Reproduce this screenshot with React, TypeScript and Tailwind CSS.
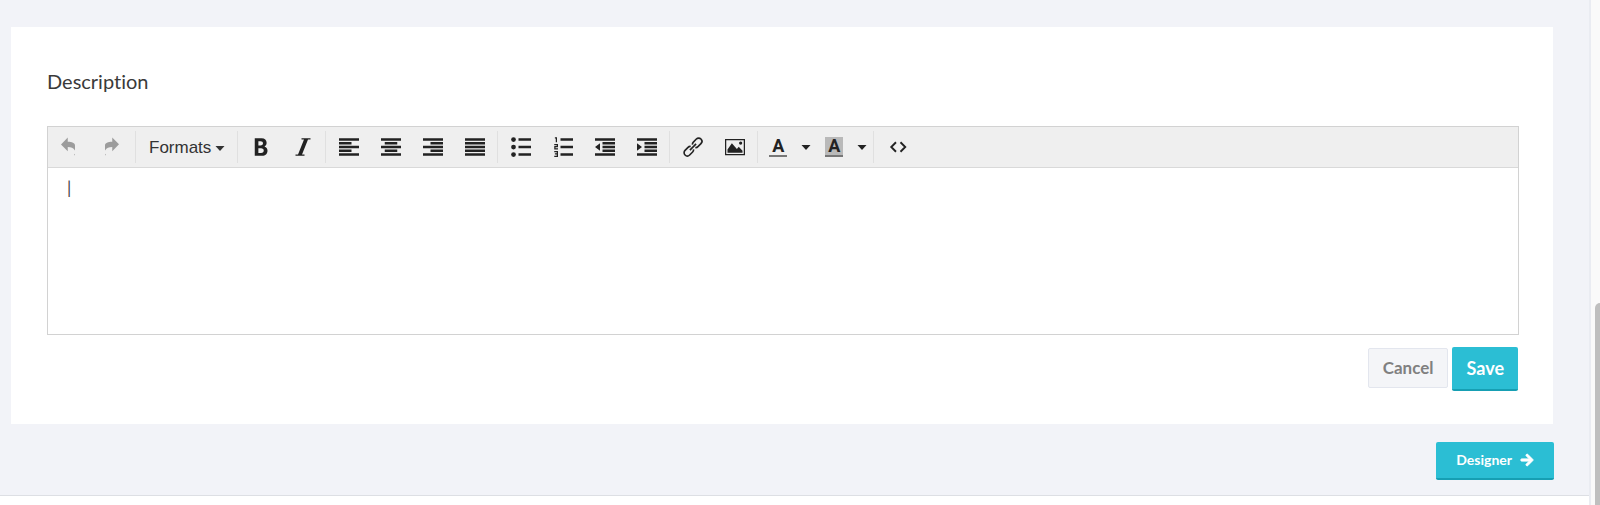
import React from 'react';
import { FaArrowRight } from 'react-icons/fa';

const ROWS = [1, 4, 7, 10, 13];

// --- ICONS (16 unit grid) ---

function Icon({ children }: { children: React.ReactNode }) {
  return (
    <svg viewBox="0 0 16 16" className="size-5 overflow-visible fill-current" aria-hidden="true">
      {children}
    </svg>
  );
}

// each bar is [x, width], top to bottom
function AlignIcon({ bars }: { bars: number[][] }) {
  return (
    <Icon>
      {bars.map(([x, w], i) => (
        <rect key={i} x={x} y={ROWS[i]} width={w} height="2" />
      ))}
    </Icon>
  );
}

const UndoIcon = () => (
  <Icon>
    <path d="M5.400.4v3.400C8.800 3.800 11.200 4.800 11.200 6.800v4C9.800 8.700 8.200 8 5.400 8v3.400L0 5.900z" />
    <path d="M10.500 14.200l.7-.9v1.500z" />
  </Icon>
);

const RedoIcon = () => (
  <Icon>
    <path d="M7.400.4v3.400C4 3.800 1.600 4.800 1.600 6.800v4C3 8.700 4.600 8 7.400 8v3.400l5.400-5.500z" />
    <path d="M2.300 14.200l-.7-.9v1.500z" />
  </Icon>
);

const BoldIcon = () => (
  <Icon>
    <path
      fillRule="evenodd"
      d="M3 1h5.500c2.500 0 4 1.400 4 3.600 0 1.300-.6 2.400-1.700 3 1.500.5 2.400 1.800 2.400 3.400 0 2.500-1.700 4-4.300 4H3zM5.900 3.300v3.400h1.700c1.300 0 2-.6 2-1.700s-.7-1.700-2-1.700zM5.900 8.900v3.800h2.200c1.400 0 2.100-.7 2.100-1.900s-.8-1.900-2.200-1.900z"
    />
  </Icon>
);

const ItalicIcon = () => (
  <Icon>
    <path d="M14 1v1h-2L7.200 14h2v1H2v-1h2L8.800 2h-2V1z" />
  </Icon>
);

const BulletsIcon = () => (
  <Icon>
    {[2, 8, 14].map((y) => (
      <g key={y}>
        <circle cx="2" cy={y} r="1.9" />
        <rect x="6" y={y - 1} width="10" height="2" />
      </g>
    ))}
  </Icon>
);

const NumbersIcon = () => (
  <Icon>
    <path d="M6 1h10v2H6zM6 7h10v2H6zM6 13h10v2H6z" />
    <path
      className="fill-none stroke-current"
      d="M1.500.7h1.200V4.200M1 6h2.500v1.700H1.500v1.800h2.500M1 11.600h2.500v3.900H1M1.500 13.500h2"
    />
  </Icon>
);

const OutdentIcon = () => (
  <Icon>
    <path d="M0 1h16v2H0zM6 4h10v2H6zM6 7h10v2H6zM6 10h10v2H6zM0 13h16v2H0zM4 5v6L0 8z" />
  </Icon>
);

const IndentIcon = () => (
  <Icon>
    <path d="M0 1h16v2H0zM6 4h10v2H6zM6 7h10v2H6zM6 10h10v2H6zM0 13h16v2H0zM0 5l4 3-4 3z" />
  </Icon>
);

const LinkIcon = () => (
  <Icon>
    <g className="fill-none stroke-current" strokeWidth="1.300" transform="rotate(-45 8 8)">
      <path d="M7 6.400a2.400 2.400 0 0 0-2-1H1.600a2.600 2.600 0 0 0 0 5.200H5a2.400 2.400 0 0 0 2-1" />
      <path d="M9 6.400a2.400 2.400 0 0 1 2-1h3.400a2.600 2.600 0 0 1 0 5.200H11a2.400 2.400 0 0 1-2-1" />
      <path d="M4.500 8h7" />
    </g>
  </Icon>
);

const ImageIcon = () => (
  <Icon>
    <path fillRule="evenodd" d="M0 1.500h16v13H0zM1 2.500v11h14v-11z" />
    <path d="M2 12.500V10l3.500-5 4 4.600 1.500-1.800 3 3.200v1.500z" />
    <circle cx="12.500" cy="4.800" r="1.300" />
  </Icon>
);

const CodeIcon = () => (
  <Icon>
    <path className="fill-none stroke-current" strokeWidth="1.500" d="M7.200 4.200L3.400 8l3.800 3.800M10.800 4.200L14.600 8l-3.800 3.800" />
  </Icon>
);

function Caret() {
  return (
    <svg viewBox="0 0 10 5" className="h-[5px] w-2.5 fill-current" aria-hidden="true">
      <path d="M.5 0h9L5 5z" />
    </svg>
  );
}

// --- TOOLBAR ---

const GROUPS = [
  [
    { label: 'Bold', icon: <BoldIcon /> },
    { label: 'Italic', icon: <ItalicIcon /> },
  ],
  [
    { label: 'Align left', icon: <AlignIcon bars={[[0, 16], [0, 10], [0, 16], [0, 10], [0, 16]]} /> },
    { label: 'Align center', icon: <AlignIcon bars={[[0, 16], [3, 10], [0, 16], [3, 10], [0, 16]]} /> },
    { label: 'Align right', icon: <AlignIcon bars={[[0, 16], [6, 10], [0, 16], [6, 10], [0, 16]]} /> },
    { label: 'Justify', icon: <AlignIcon bars={[[0, 16], [0, 16], [0, 16], [0, 16], [0, 16]]} /> },
  ],
  [
    { label: 'Bullet list', icon: <BulletsIcon /> },
    { label: 'Numbered list', icon: <NumbersIcon /> },
    { label: 'Decrease indent', icon: <OutdentIcon /> },
    { label: 'Increase indent', icon: <IndentIcon /> },
  ],
  [
    { label: 'Insert link', icon: <LinkIcon /> },
    { label: 'Insert image', icon: <ImageIcon /> },
  ],
];

function Group({ children }: { children: React.ReactNode }) {
  return <div className="flex h-8 items-center border-r border-[#e0e0e0] pr-px pl-0.5">{children}</div>;
}

function ToolButton({ label, disabled, children }: { label: string; disabled?: boolean; children: React.ReactNode }) {
  return (
    <button
      type="button"
      aria-label={label}
      disabled={disabled}
      className="flex h-8 w-[42px] items-center justify-center disabled:opacity-40"
    >
      {children}
    </button>
  );
}

function ColorButton({ label, swatch }: { label: string; swatch?: boolean }) {
  return (
    <div className="flex items-center">
      <button type="button" aria-label={label} className="flex h-8 w-9 items-center justify-center">
        <span
          className={`flex h-5 w-[18px] items-center justify-center border-b-2 border-[#777] font-['Roboto',sans-serif] text-lg font-bold ${swatch ? 'bg-[#b9b9b9]' : ''}`}
        >
          A
        </span>
      </button>
      <button type="button" aria-label={`${label} options`} className="flex h-8 w-5 items-center justify-center">
        <Caret />
      </button>
    </div>
  );
}

function Toolbar() {
  return (
    <div
      role="toolbar"
      className="flex flex-wrap items-center border-b border-[#d9d9d9] bg-[#efefef] py-1 text-[#222]"
    >
      <Group>
        <ToolButton label="Undo" disabled><UndoIcon /></ToolButton>
        <ToolButton label="Redo" disabled><RedoIcon /></ToolButton>
      </Group>
      <Group>
        <button
          type="button"
          className="flex h-8 items-center gap-1 px-[11px] pt-0.5 font-['Liberation_Sans',sans-serif] text-[17px] text-[#333]"
        >
          Formats <Caret />
        </button>
      </Group>
      {GROUPS.map((group, i) => (
        <Group key={i}>
          {group.map((tool) => (
            <ToolButton key={tool.label} label={tool.label}>{tool.icon}</ToolButton>
          ))}
        </Group>
      ))}
      <Group>
        <ColorButton label="Text color" />
        <ColorButton label="Background color" swatch />
      </Group>
      <div className="pl-0.5">
        <ToolButton label="Source code"><CodeIcon /></ToolButton>
      </div>
    </div>
  );
}

export default function App() {
  return (
    <div className="flex min-h-screen bg-[#fafafa] font-['Lato',sans-serif] antialiased [font-variant-ligatures:none]">
      <div className="flex flex-1 flex-col border-r-2 border-[#eaecf2] bg-white">
        <main className="border-b border-[#dddfe4] bg-[#f2f3f8] pt-[27px] pr-9 pb-[15px] pl-[11px]">
          <section className="bg-white pt-10 pr-[34px] pb-[33px] pl-9">
            <label htmlFor="description" className="block text-xl leading-7 text-[#3a3a3a]">
              Description
            </label>
            <div className="mt-[31px] border border-[#d2d2d2]">
              <Toolbar />
              <textarea
                id="description"
                defaultValue="|"
                className="block h-[166px] w-full resize-none bg-white px-[19px] py-2 text-[17px] leading-6 text-[#444] outline-none"
              />
            </div>
            <div className="mt-3 flex items-start justify-end gap-1 pr-px">
              <button
                type="button"
                className="mt-px h-10 rounded-xs border border-[#e3e6ee] bg-[#f4f5f8] px-3.5 text-[17px] font-bold text-[#808080]"
              >
                Cancel
              </button>
              <button
                type="button"
                className="h-11 rounded-xs border-b-2 border-[#169fb3] bg-[#2bbed4] px-3.5 text-lg font-bold text-white"
              >
                Save
              </button>
            </div>
          </section>
          <div className="mt-[18px] -mr-px flex justify-end">
            <button
              type="button"
              className="flex h-[38px] items-center gap-2 rounded-xs border-b-2 border-[#169fb3] bg-[#2bbed4] px-5 text-sm font-bold text-white"
            >
              Designer <FaArrowRight className="overflow-visible stroke-white" strokeWidth="36" aria-hidden="true" />
            </button>
          </div>
        </main>
      </div>
      {/* Scroll track */}
      <div className="flex w-[9px] items-end justify-end">
        <div className="h-2/5 w-[5px] rounded-tl-full bg-[#bfbfbf]" />
      </div>
    </div>
  );
}
